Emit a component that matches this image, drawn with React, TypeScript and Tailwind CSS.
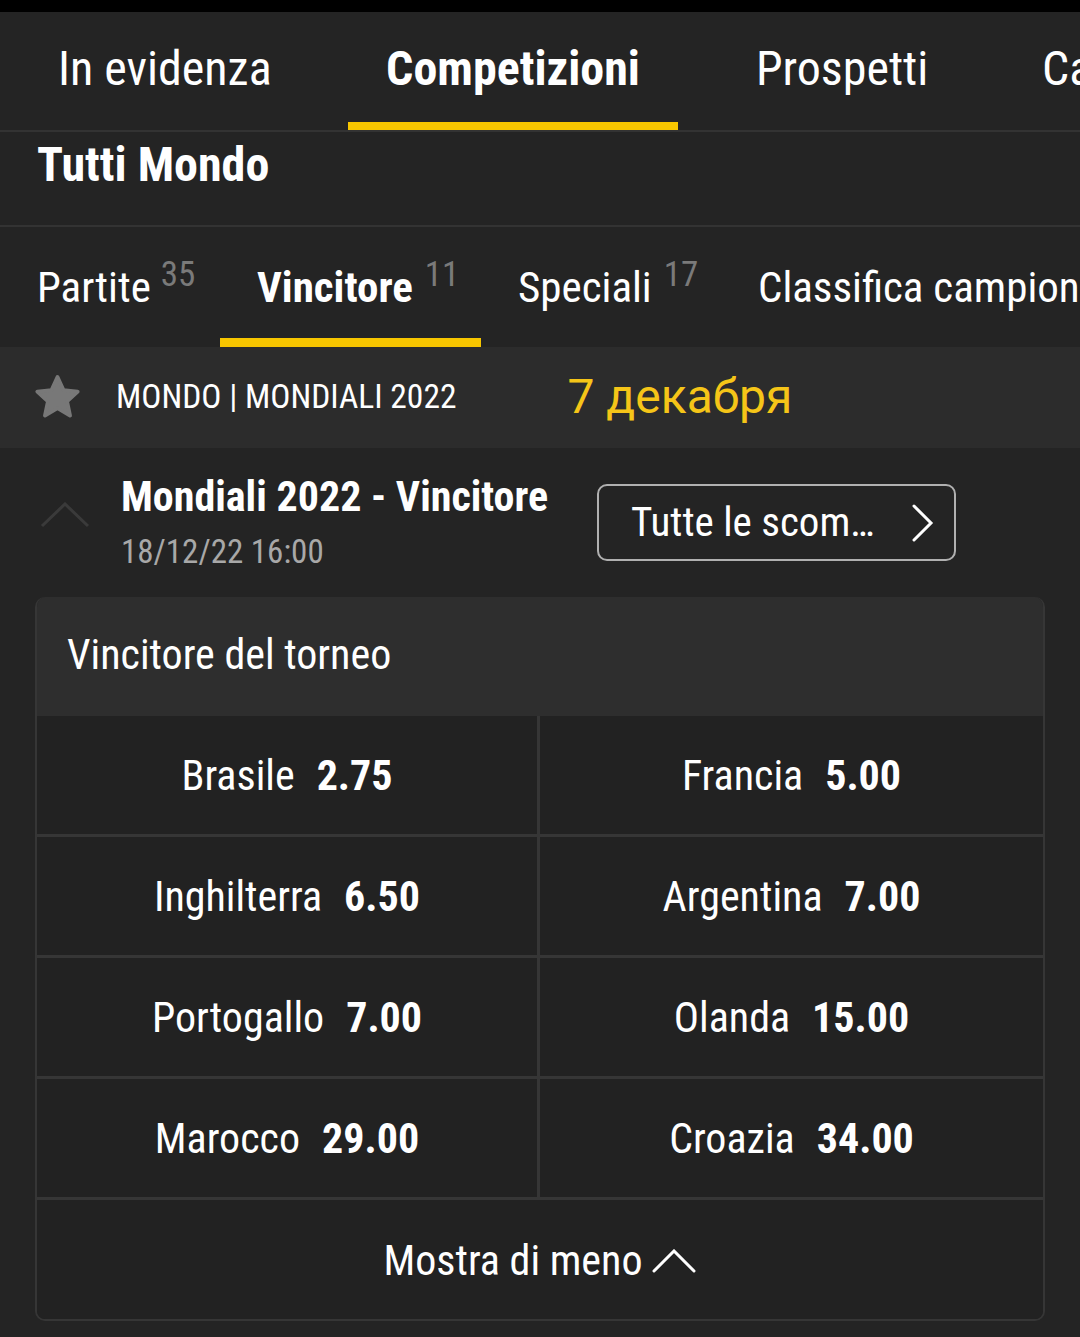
const odds: [string, string][] = [
  ["Brasile", "2.75"],
  ["Francia", "5.00"],
  ["Inghilterra", "6.50"],
  ["Argentina", "7.00"],
  ["Portogallo", "7.00"],
  ["Olanda", "15.00"],
  ["Marocco", "29.00"],
  ["Croazia", "34.00"],
];

const font = "font-['Roboto',sans-serif] font-stretch-[75%]";

const App = () => {
  return (
    <div className={`w-[1080px] h-[1337px] bg-[#242424] text-white overflow-hidden ${font}`}>
      <div className="h-[12px] bg-black" />

      {/* Top tabs */}
      <div className="h-[120px] flex items-stretch border-b-2 border-[#333] whitespace-nowrap">
        <div className="shrink-0 pl-[58px] w-[348px] flex items-center pb-[4px] text-[48px]">In evidenza</div>
        <div className="shrink-0 w-[330px] flex flex-col items-center">
          <div className="flex-1 flex items-center pt-[4px] text-[48px] font-bold">Competizioni</div>
          <div className="h-[8px] w-full bg-[#f7c600]" />
        </div>
        <div className="shrink-0 pl-[78px] w-[364px] flex items-center pb-[4px] text-[48px]">Prospetti</div>
        <div className="shrink-0 flex items-center pb-[4px] text-[48px]">Ca</div>
      </div>

      {/* Title */}
      <div className="h-[95px] border-b-2 border-[#333] pl-[37px] flex items-center pb-[28px]">
        <span className="text-[48px] font-bold">Tutti Mondo</span>
      </div>

      {/* Sub tabs */}
      <div className="h-[120px] flex items-stretch whitespace-nowrap">
        <div className="shrink-0 pl-[37px] w-[220px] flex items-center">
          <span className="text-[43px]">Partite</span>
          <span className="text-[35px] text-[#7a7a7a] ml-[10px] -mt-[24px]">35</span>
        </div>
        <div className="shrink-0 w-[261px] flex flex-col">
          <div className="flex-1 flex items-center pl-[37px] pt-[9px]">
            <span className="text-[43px] font-bold">Vincitore</span>
            <span className="text-[35px] text-[#7a7a7a] ml-[12px] -mt-[24px]">11</span>
          </div>
          <div className="h-[9px] w-full bg-[#f7c600]" />
        </div>
        <div className="shrink-0 pl-[37px] w-[277px] flex items-center">
          <span className="text-[43px]">Speciali</span>
          <span className="text-[35px] text-[#7a7a7a] ml-[12px] -mt-[24px]">17</span>
        </div>
        <div className="shrink-0 flex items-center">
          <span className="text-[43px]">Classifica campionato</span>
        </div>
      </div>

      {/* League row */}
      <div className="h-[101px] bg-[#2c2c2c] flex items-center whitespace-nowrap">
        <svg className="shrink-0 ml-[31px] w-[53px] h-[51px]" viewBox="0 0 24 24">
          <path
            d="M12 2.4l2.8 6.1 6.7.7-5 4.6 1.4 6.7L12 17l-5.9 3.5 1.4-6.7-5-4.6 6.7-.7z"
            fill="#787878"
            stroke="#787878"
            strokeWidth="1.8"
            strokeLinejoin="round"
          />
        </svg>
        <span className="ml-[32px] text-[33.5px]">MONDO | MONDIALI 2022</span>
        <span className="ml-[111px] text-[48px] text-[#f5c518] font-['Roboto',sans-serif] font-stretch-[100%] -mt-[2px]">
          7 декабря
        </span>
      </div>

      {/* Event header */}
      <div className="h-[149px] flex items-start whitespace-nowrap">
        <svg className="shrink-0 ml-[40px] mt-[54px] w-[50px] h-[26px]" viewBox="0 0 50 26">
          <polyline points="2,24 25,2 48,24" fill="none" stroke="#3a3a3a" strokeWidth="3" />
        </svg>
        <div className="shrink-0 ml-[31px] mt-[23px] w-[476px] flex flex-col">
          <span className="text-[42px] font-bold leading-[52px]">Mondiali 2022 - Vincitore</span>
          <span className="text-[33px] text-[#a8a8a8] leading-[40px] mt-[9px]">18/12/22 16:00</span>
        </div>
        <div className="shrink-0 mt-[36px] w-[359px] h-[77px] border-2 border-[#b0b0b0] rounded-[10px] flex items-center pl-[32px] pr-[20px]">
          <span className="text-[41px] flex-1">Tutte le scom…</span>
          <svg className="w-[22px] h-[38px]" viewBox="0 0 22 38">
            <polyline points="2,2 19,19 2,36" fill="none" stroke="white" strokeWidth="3" strokeLinecap="round" />
          </svg>
        </div>
      </div>

      {/* Card */}
      <div className="mx-[35px] rounded-[10px] border-2 border-t-0 border-[#363636] overflow-hidden">
        <div className="h-[119px] bg-[#2e2e2e] flex items-center pl-[30px] pb-[4px]">
          <span className="text-[42px]">Vincitore del torneo</span>
        </div>
        <div className="grid grid-cols-2 bg-[#222222]">
          {odds.map(([team, price], i) => (
            <div
              key={team}
              className={`h-[121px] flex items-center justify-center border-b-[3px] border-[#363636] whitespace-nowrap ${
                i % 2 === 0 ? "border-r-[3px]" : ""
              }`}
            >
              <span className="text-[42px]">{team}</span>
              <span className="text-[42px] font-bold ml-[22px]">{price}</span>
            </div>
          ))}
          <div className="col-span-2 h-[119px] flex items-center justify-center pt-[2px]">
            <span className="text-[42px]">Mostra di meno</span>
            <svg className="ml-[10px] w-[44px] h-[24px]" viewBox="0 0 44 24">
              <polyline points="2,22 22,2 42,22" fill="none" stroke="white" strokeWidth="3" strokeLinecap="round" />
            </svg>
          </div>
        </div>
      </div>
    </div>
  );
};

export default App;
